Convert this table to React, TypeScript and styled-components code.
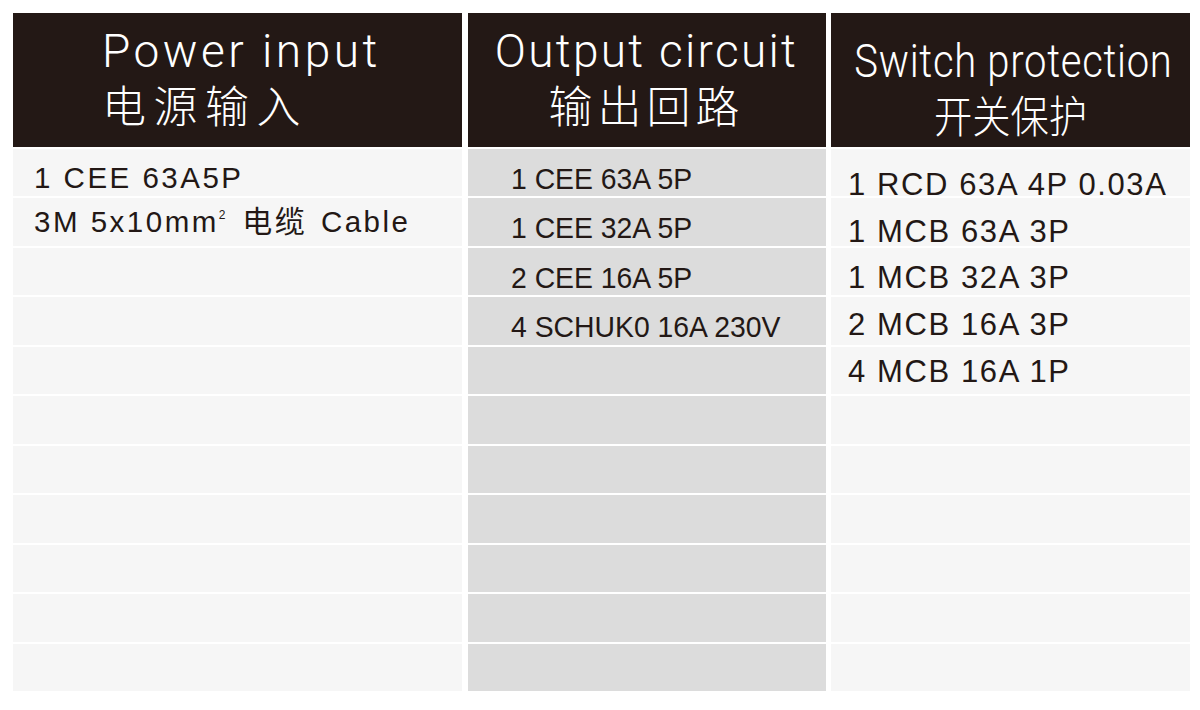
import React from "react";
import styled, { createGlobalStyle } from "styled-components";

const GlobalStyle = createGlobalStyle`
  html, body { margin: 0; padding: 0; background: #ffffff; }
  body { font-family: "Liberation Sans", Arial, "Noto Sans CJK SC", sans-serif; }
`;

const Page = styled.div`
  width: 1200px;
  height: 710px;
  box-sizing: border-box;
  padding: 13px 0 0 13px;
  display: grid;
  grid-template-columns: 449px 358px 359px;
  column-gap: 5.5px;
  align-items: start;
  background: #ffffff;
`;

const Column = styled.section`
  display: flex;
  flex-direction: column;
  gap: 2px;
`;

const Header = styled.header<{ $top: number; $align: "left" | "center"; $indent: number }>`
  height: 134px;
  box-sizing: border-box;
  background: #231815;
  color: #ffffff;
  padding-top: ${(p) => p.$top}px;
  padding-left: ${(p) => p.$indent}px;
  text-align: ${(p) => p.$align};
  overflow: hidden;
`;

const HeaderText = styled.div<{ $squeeze: number }>`
  transform: scaleX(${(p) => p.$squeeze});
  transform-origin: center top;
`;

const TitleEn = styled.div<{ $tracking: number }>`
  font-family: Roboto, "Liberation Sans", sans-serif;
  font-weight: 300;
  font-size: 46px;
  line-height: 46px;
  letter-spacing: ${(p) => p.$tracking}px;
  white-space: nowrap;
`;

const TitleZh = styled.div<{ $tracking: number }>`
  font-family: "Noto Sans CJK SC", sans-serif;
  font-weight: 300;
  font-size: 44px;
  line-height: 60px;
  letter-spacing: ${(p) => p.$tracking}px;
  white-space: nowrap;
`;

const Body = styled.div`
  position: relative;
  height: 542px;
  display: flex;
  flex-direction: column;
  gap: 2px;
`;

const Row = styled.div<{ $tone: string }>`
  flex: 1;
  background: ${(p) => p.$tone};
`;

const Lines = styled.div<{ $top: number; $left: number }>`
  position: absolute;
  inset: 0;
  padding-top: ${(p) => p.$top}px;
  padding-left: ${(p) => p.$left}px;
  box-sizing: border-box;
`;

const Line = styled.div<{ $pitch: number; $size: number; $tracking: number; $squeeze: number }>`
  height: ${(p) => p.$pitch}px;
  line-height: ${(p) => p.$pitch}px;
  font-family: "Liberation Sans", Arial, "Noto Sans CJK SC", sans-serif;
  font-size: ${(p) => p.$size}px;
  letter-spacing: ${(p) => p.$tracking}px;
  color: #231815;
  white-space: nowrap;
  transform: scaleX(${(p) => p.$squeeze});
  transform-origin: left center;
`;

const Sup = styled.span`
  font-size: 12px;
  vertical-align: 13px;
  line-height: 0;
  letter-spacing: 0;
  margin-right: 3px;
`;

const Zh = styled.span`
  font-family: "Noto Sans CJK SC", sans-serif;
  font-size: 30px;
  line-height: 0;
  margin: 0 3px;
`;

type Col = {
  en: string;
  zh: string;
  headTop: number;
  align: "left" | "center";
  indent: number;
  squeeze: number;
  enTracking: number;
  zhTracking: number;
  tone: string;
  linesTop: number;
  linesLeft: number;
  pitch: number;
  size: number;
  tracking: number;
  textSqueeze: number;
  lines: React.ReactNode[];
};

const columns: Col[] = [
  {
    en: "Power input",
    zh: "电源输入",
    headTop: 15,
    align: "left",
    indent: 89,
    squeeze: 1,
    enTracking: 3.5,
    zhTracking: 7.5,
    tone: "#f6f6f6",
    linesTop: 6.8,
    linesLeft: 21,
    pitch: 44,
    size: 29.5,
    tracking: 2.5,
    textSqueeze: 1,
    lines: [
      "1 CEE 63A5P",
      <>
        3M 5x10mm<Sup>2</Sup> <Zh>电缆</Zh> Cable
      </>,
    ],
  },
  {
    en: "Output circuit",
    zh: "输出回路",
    headTop: 15,
    align: "center",
    indent: 0,
    squeeze: 1,
    enTracking: 2.3,
    zhTracking: 5,
    tone: "#dcdcdc",
    linesTop: 4.9,
    linesLeft: 43,
    pitch: 49.45,
    size: 30,
    tracking: 0,
    textSqueeze: 0.945,
    lines: ["1 CEE 63A 5P", "1 CEE 32A 5P", "2 CEE 16A 5P", "4 SCHUK0 16A 230V"],
  },
  {
    en: "Switch protection",
    zh: "开关保护",
    headTop: 25,
    align: "center",
    indent: 0,
    squeeze: 0.87,
    enTracking: 0.8,
    zhTracking: 0,
    tone: "#f6f6f6",
    linesTop: 12.9,
    linesLeft: 17,
    pitch: 46.8,
    size: 31,
    tracking: 1.6,
    textSqueeze: 1,
    lines: ["1 RCD 63A 4P 0.03A", "1 MCB 63A 3P", "1 MCB 32A 3P", "2 MCB 16A 3P", "4 MCB 16A 1P"],
  },
];

const ROWS = 11;

export default function App() {
  return (
    <>
      <GlobalStyle />
      <Page>
        {columns.map((c) => (
          <Column key={c.en}>
            <Header $top={c.headTop} $align={c.align} $indent={c.indent}>
              <HeaderText $squeeze={c.squeeze}>
                <TitleEn $tracking={c.enTracking}>{c.en}</TitleEn>
                <TitleZh $tracking={c.zhTracking}>{c.zh}</TitleZh>
              </HeaderText>
            </Header>
            <Body>
              {Array.from({ length: ROWS }, (_, i) => (
                <Row key={i} $tone={c.tone} />
              ))}
              <Lines $top={c.linesTop} $left={c.linesLeft}>
                {c.lines.map((l, i) => (
                  <Line
                    key={i}
                    $pitch={c.pitch}
                    $size={c.size}
                    $tracking={c.tracking}
                    $squeeze={c.textSqueeze}
                  >
                    {l}
                  </Line>
                ))}
              </Lines>
            </Body>
          </Column>
        ))}
      </Page>
    </>
  );
}
